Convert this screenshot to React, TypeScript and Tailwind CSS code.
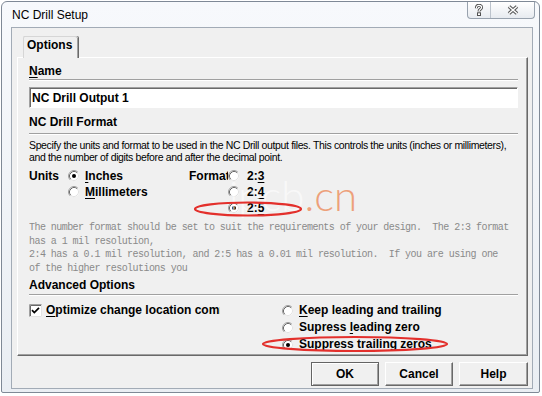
import React from 'react';

const Radio = ({ checked = false }: { checked?: boolean }) => (
  <svg width="12" height="12" viewBox="0 0 12 12" className="shrink-0">
    <circle cx="6" cy="6" r="5" fill="#ffffff" />
    <path d="M2.11 9.89A5.5 5.5 0 0 1 9.89 2.11" fill="none" stroke="#a0a0a0" />
    <path d="M2.82 9.18A4.5 4.5 0 0 1 9.18 2.82" fill="none" stroke="#696969" />
    <path d="M2.82 9.18A4.5 4.5 0 0 0 9.18 2.82" fill="none" stroke="#e3e3e3" />
    {checked && <circle cx="6" cy="6" r="2" fill="#000000" />}
  </svg>
);

const CheckBox = () => (
  <svg width="13" height="13" viewBox="0 0 13 13" className="shrink-0">
    <rect x="0" y="0" width="13" height="13" fill="#ffffff" />
    <path d="M0.5 13V0.5H13" fill="none" stroke="#a0a0a0" />
    <path d="M1.5 12V1.5H12" fill="none" stroke="#696969" />
    <path d="M12.5 0.5V12.5H0.5" fill="none" stroke="#e3e3e3" />
    <path d="M3 6.2l2.3 2.4L10 3.8" fill="none" stroke="#000000" strokeWidth="1.7" />
  </svg>
);

const Separator = () => <div className="h-[2px] border-y border-[#a0a0a0] border-b-white" />;

const helpText = [
  'The number format should be set to suit the requirements of your design.  The 2:3 format',
  'has a 1 mil resolution,',
  '2:4 has a 0.1 mil resolution, and 2:5 has a 0.01 mil resolution.  If you are using one',
  'of the higher resolutions you',
];

export default function App() {
  return (
    <div className="relative h-[396px] w-[542px] overflow-hidden bg-white font-['Liberation_Sans',Arial,sans-serif] text-black">
      <div className="ml-px mt-px flex h-[392px] w-[539px] flex-col rounded-t-[6px] rounded-b-[2px] border border-[#7f8996] bg-gradient-to-b from-[#f7f9fc] to-[#eaeef3]">
        {/* Title bar */}
        <div className="flex h-[25px] items-start justify-between">
          <div className="pl-[10px] pt-[5px] text-[12px] leading-[16px]">NC Drill Setup</div>
          <div className="mr-[4px] flex h-[17px] rounded-b-[4px] border border-t-0 border-[#98a2ae] bg-gradient-to-b from-white to-[#e7ebf0]">
            <div className="flex w-[23px] items-center justify-center border-r border-[#bcc3cc]">
              <svg width="10" height="12" viewBox="0 0 10 12">
                <path d="M2.4 4.2C2.4 2 3.8 1.3 5 1.3C6.5 1.3 7.6 2.2 7.6 3.5C7.6 5.2 5 5.4 5 7.4" fill="none" stroke="#505050" strokeWidth="3" />
                <path d="M2.4 4.2C2.4 2 3.8 1.3 5 1.3C6.5 1.3 7.6 2.2 7.6 3.5C7.6 5.2 5 5.4 5 7.4" fill="none" stroke="#ffffff" strokeWidth="1.2" />
                <rect x="3.5" y="8.8" width="3" height="2.7" fill="#ffffff" stroke="#505050" strokeWidth="1" />
              </svg>
            </div>
            <div className="flex w-[43px] items-center justify-center">
              <svg width="12" height="10" viewBox="0 0 12 10">
                <path d="M2 1.5L10 8.5M10 1.5L2 8.5" stroke="#555555" strokeWidth="3.6" />
                <path d="M2 1.5L10 8.5M10 1.5L2 8.5" stroke="#ffffff" strokeWidth="1.5" />
              </svg>
            </div>
          </div>
        </div>

        {/* Client area */}
        <div className="ml-[9px] mr-[6px] flex h-[362px] flex-col border border-[#a2abb6] bg-[#f0f0f0] pl-[5px] pr-[4px] pt-[8px]">
          {/* Tab strip */}
          <div className="flex h-[21px]">
            <div className="relative z-10 -mb-px ml-[6px] h-[22px] w-[55px] rounded-t-[2px] border-l border-t border-[#d6d6d6] bg-[#f0f0f0] pl-[3px] text-[12px] font-bold leading-[16px] shadow-[inset_-1px_0_0_#a0a0a0,1px_0_0_#696969]">
              Options
            </div>
          </div>

          {/* Tab panel */}
          <div className="flex h-[299px] flex-col overflow-hidden border border-white border-b-[#696969] border-r-[#696969] pl-[11px] pr-[9px] pt-[5px] shadow-[inset_-1px_-1px_0_#a0a0a0]">
            <div className="h-[16px] text-[12px] font-bold leading-[16px]">
              <u className="underline-offset-2">N</u>ame
            </div>
            <Separator />
            <div className="mt-[6px] flex h-[21px] items-center border border-[#a0a0a0] border-b-white border-r-white bg-white pl-[2px] text-[12px] font-bold shadow-[inset_1px_1px_0_#696969]">
              NC Drill Output 1
            </div>

            <div className="mt-[6px] h-[16px] text-[12px] font-bold leading-[16px]">NC Drill Format</div>
            <div className="mt-[3px]">
              <Separator />
            </div>
            <div className="mt-[4px] text-[10.5px] leading-[12px] tracking-[-0.36px]">
              <div className="whitespace-nowrap">
                Specify the units and format to be used in the NC Drill output files. This controls the units (inches or millimeters),
              </div>
              <div className="whitespace-nowrap">and the number of digits before and after the decimal point.</div>
            </div>

            {/* Units / Format */}
            <div className="mt-[5px] flex text-[12px] font-bold leading-[16px]">
              <div className="w-[39px]">Units</div>
              <div className="flex w-[121px] flex-col">
                <div className="flex h-[16px] items-center gap-[5px]">
                  <Radio checked />
                  <span>
                    <u className="underline-offset-2">I</u>nches
                  </span>
                </div>
                <div className="flex h-[16px] items-center gap-[5px]">
                  <Radio />
                  <span className="w-[63px] overflow-hidden whitespace-nowrap">
                    <u className="underline-offset-2">M</u>illimeters
                  </span>
                </div>
              </div>
              <div className="flex flex-col">
                <div className="flex h-[16px] items-center">
                  <span className="w-[39px] overflow-hidden whitespace-nowrap">Format</span>
                  <Radio />
                  <span className="ml-[7px]">
                    2:<u className="underline-offset-2">3</u>
                  </span>
                </div>
                <div className="flex h-[16px] items-center pl-[39px]">
                  <Radio />
                  <span className="ml-[7px]">
                    2:<u className="underline-offset-2">4</u>
                  </span>
                </div>
                <div className="flex h-[16px] items-center pl-[39px]">
                  <Radio checked />
                  <span className="ml-[7px]">
                    2:<u className="underline-offset-2">5</u>
                  </span>
                </div>
              </div>
            </div>

            {/* Read-only help text */}
            <div className="mt-[5px] h-[52px] overflow-hidden whitespace-pre font-['Liberation_Mono',monospace] text-[10px] leading-[13.5px] tracking-[-0.55px] text-[#8a8a8a]">
              {helpText.map((line, i) => (
                <div key={i}>{line}</div>
              ))}
            </div>

            <div className="mt-[4px] h-[16px] text-[12px] font-bold leading-[16px]">Advanced Options</div>
            <div className="mt-px">
              <Separator />
            </div>

            <div className="mt-[6px] flex text-[12px] font-bold leading-[17px]">
              <div className="flex h-[17px] w-[253px] items-center">
                <CheckBox />
                <span className="ml-[4px] w-[174px] overflow-hidden whitespace-nowrap">
                  <u className="underline-offset-2">O</u>ptimize change location commands
                </span>
              </div>
              <div className="flex flex-col">
                <div className="flex h-[17px] items-center gap-[5px]">
                  <Radio />
                  <span>
                    <u className="underline-offset-2">K</u>eep leading and trailing
                  </span>
                </div>
                <div className="flex h-[17px] items-center gap-[5px]">
                  <Radio />
                  <span>
                    Supress <u className="underline-offset-2">l</u>eading zero
                  </span>
                </div>
                <div className="flex h-[17px] items-center gap-[5px]">
                  <Radio checked />
                  <span>
                    Suppress <u className="underline-offset-2">t</u>railing zeros
                  </span>
                </div>
              </div>
            </div>
          </div>

          {/* Dialog buttons */}
          <div className="mt-[6px] flex justify-end gap-[6px] text-[12px] font-bold">
            <button className="h-[24px] w-[68px] border border-[#646464] bg-[#f0f0f0] shadow-[inset_1px_1px_0_#ffffff,inset_-1px_-1px_0_#a0a0a0]">
              OK
            </button>
            <button className="h-[24px] w-[68px] border border-white border-b-[#696969] border-r-[#696969] bg-[#f0f0f0] shadow-[inset_-1px_-1px_0_#a0a0a0]">
              Cancel
            </button>
            <button className="h-[24px] w-[69px] border border-white border-b-[#696969] border-r-[#696969] bg-[#f0f0f0] shadow-[inset_-1px_-1px_0_#a0a0a0]">
              Help
            </button>
          </div>
        </div>
      </div>

      {/* Watermark */}
      <div className="pointer-events-none absolute left-[229px] top-[174px] whitespace-nowrap font-['Lato',sans-serif] text-[42px] font-light leading-none">
        <span className="text-white/60">ipcb</span>
        <span className="text-[#eda07a]">.cn</span>
      </div>

      {/* Red annotation ellipses */}
      <svg className="pointer-events-none absolute inset-0" width="542" height="396">
        <ellipse cx="248" cy="209" rx="53" ry="6.5" fill="none" stroke="#e3302c" strokeWidth="2.2" />
        <ellipse cx="355" cy="344" rx="92" ry="7" fill="none" stroke="#e3302c" strokeWidth="2.2" />
      </svg>
    </div>
  );
}
